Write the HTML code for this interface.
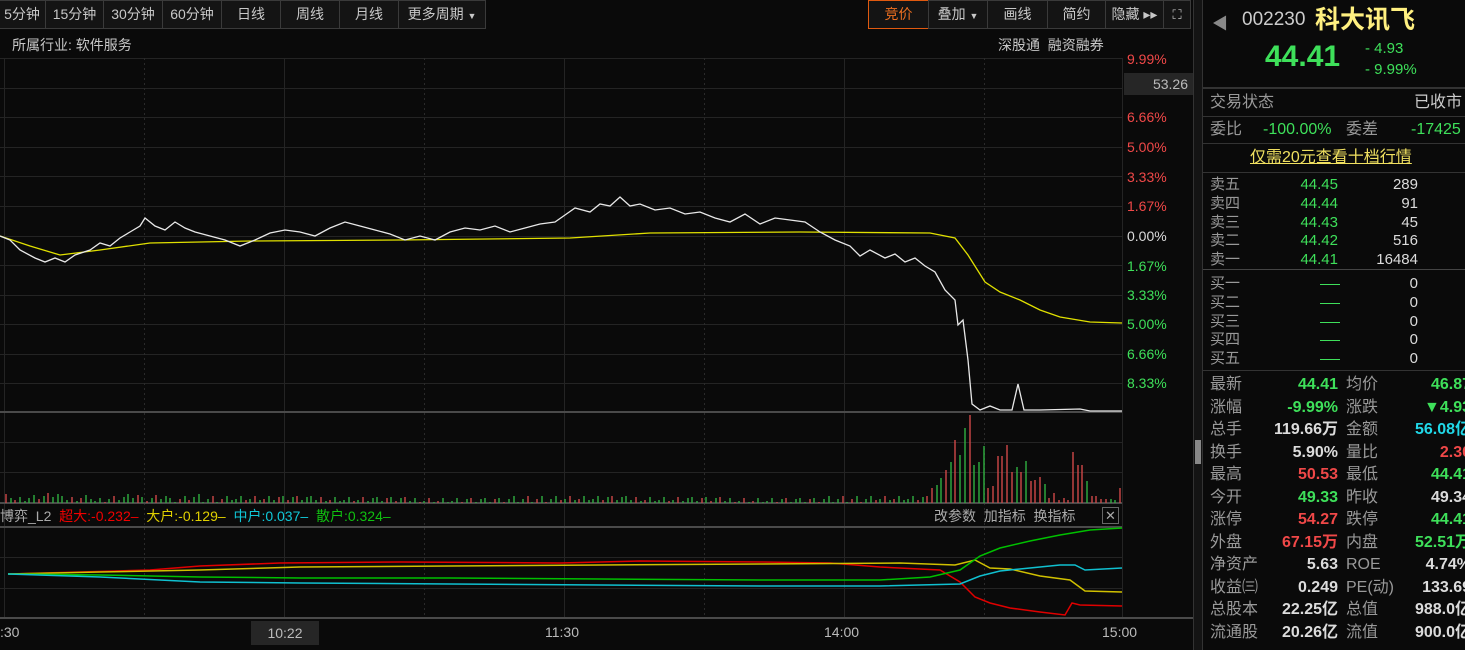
<!DOCTYPE html>
<html><head><meta charset="utf-8"><style>
*{margin:0;padding:0;box-sizing:border-box}
body{width:1465px;height:650px;background:#0a0a0a;overflow:hidden;position:relative;font-family:"Liberation Sans","Noto Sans CJK SC",sans-serif;color:#c8c8c8}
.a{position:absolute;white-space:nowrap}
.btn{position:absolute;top:0;height:29px;border:1px solid #3a3a3a;background:#141414;color:#c8c8c8;font-size:14px;line-height:27px;text-align:center}
.g{color:#3ee05a}.r{color:#f04848}.w{color:#dcdcdc}.y{color:#f0e040}.c{color:#20d8e8}
.rp{font-size:16px;line-height:20px}
.ob{font-size:15px}
.ob .a{line-height:18px}
</style></head><body>
<div class="btn" style="left:-2px;width:48px">5分钟</div>
<div class="btn" style="left:45px;width:59px">15分钟</div>
<div class="btn" style="left:103px;width:60px">30分钟</div>
<div class="btn" style="left:162px;width:60px">60分钟</div>
<div class="btn" style="left:221px;width:60px">日线</div>
<div class="btn" style="left:280px;width:60px">周线</div>
<div class="btn" style="left:339px;width:60px">月线</div>
<div class="btn" style="left:398px;width:88px">更多周期 <span style="font-size:9px">▼</span></div>
<div class="btn" style="left:868px;width:61px;border-color:#e05a10;color:#f07020">竞价</div>
<div class="btn" style="left:928px;width:60px">叠加 <span style="font-size:9px">▼</span></div>
<div class="btn" style="left:987px;width:61px">画线</div>
<div class="btn" style="left:1047px;width:59px">简约</div>
<div class="btn" style="left:1105px;width:59px">隐藏 ▸▸</div>
<div class="btn" style="left:1163px;width:28px;font-size:13px">⛶</div>
<div class="a" style="left:12px;top:36px;font-size:14px;line-height:18px">所属行业: 软件服务</div>
<div class="a" style="left:998px;top:36px;font-size:14px;line-height:18px">深股通 &nbsp;融资融券</div>
<svg class="a" style="left:0;top:0" width="1200" height="650" id="ch">
<g stroke="#242424" stroke-width="1">
<line x1="0" y1="58.5" x2="1122" y2="58.5"/><line x1="0" y1="88.5" x2="1122" y2="88.5"/><line x1="0" y1="117.5" x2="1122" y2="117.5"/><line x1="0" y1="147.5" x2="1122" y2="147.5"/><line x1="0" y1="176.5" x2="1122" y2="176.5"/><line x1="0" y1="206.5" x2="1122" y2="206.5"/><line x1="0" y1="236.5" x2="1122" y2="236.5"/><line x1="0" y1="265.5" x2="1122" y2="265.5"/><line x1="0" y1="295.5" x2="1122" y2="295.5"/><line x1="0" y1="324.5" x2="1122" y2="324.5"/><line x1="0" y1="354.5" x2="1122" y2="354.5"/><line x1="0" y1="383.5" x2="1122" y2="383.5"/>
<line x1="0" y1="442.5" x2="1122" y2="442.5"/><line x1="0" y1="472.5" x2="1122" y2="472.5"/>
<line x1="0" y1="557.5" x2="1122" y2="557.5"/><line x1="0" y1="588.5" x2="1122" y2="588.5"/>
<line x1="284.5" y1="58" x2="284.5" y2="618"/><line x1="564.5" y1="58" x2="564.5" y2="618"/><line x1="844.5" y1="58" x2="844.5" y2="618"/><line x1="1122.5" y1="58" x2="1122.5" y2="618"/>
<line x1="4.5" y1="58" x2="4.5" y2="618"/>
</g>
<g stroke="#2a2a2a" stroke-dasharray="2,3"><line x1="144.5" y1="58" x2="144.5" y2="618"/><line x1="424.5" y1="58" x2="424.5" y2="618"/><line x1="704.5" y1="58" x2="704.5" y2="618"/><line x1="984.5" y1="58" x2="984.5" y2="618"/></g>
<g stroke="#4a4a4a" stroke-width="2"><line x1="0" y1="412" x2="1122" y2="412"/><line x1="0" y1="503" x2="1122" y2="503"/><line x1="0" y1="527" x2="1122" y2="527"/><line x1="0" y1="618" x2="1200" y2="618"/></g>
<g id="vol"></g>
<polyline fill="none" stroke="#e0e000" stroke-width="1.3" points="0,236 30,246 60,255 100,250 150,243 250,241 400,240 570,238 650,233 800,232 930,233 955,238 968,255 985,282 1000,292 1020,300 1040,310 1060,317 1090,322 1122,323"/>
<polyline id="pl" fill="none" stroke="#e8e8e8" stroke-width="1.3"/>
<polyline fill="none" stroke="#e00000" stroke-width="1.5" points="8,574 80,572 150,570 200,566 280,563 400,562 560,563 640,561 760,562 830,563 880,567 940,570 960,582 975,597 990,603 1010,608 1040,612 1065,615 1072,603 1080,605 1122,606"/>
<polyline fill="none" stroke="#d0c000" stroke-width="1.5" points="8,574 100,572 200,570 300,567 450,566 600,565 760,564 900,563 955,565 975,560 990,568 1010,569 1040,576 1070,580 1085,591 1122,592"/>
<polyline fill="none" stroke="#00c000" stroke-width="1.5" points="8,574 100,575 200,577 300,578 450,578 600,579 760,580 880,580 930,577 960,570 980,556 1000,548 1030,541 1060,535 1090,530 1122,528"/>
<polyline fill="none" stroke="#10c0d0" stroke-width="1.5" points="8,574 100,577 200,582 300,583 450,584 600,585 760,586 880,586 960,584 980,576 1000,571 1030,568 1060,565 1075,565 1085,570 1122,568"/>
</svg>
<div class="a r" style="left:1127px;top:51px;font-size:14px">9.99%</div>
<div class="a" style="left:1124px;top:73px;width:70px;height:22px;background:#262626;color:#bbb;font-size:14px;line-height:22px;text-align:right;padding-right:6px">53.26</div>
<div class="a r" style="left:1127px;top:110px;font-size:14px;line-height:1;">6.66%</div>
<div class="a r" style="left:1127px;top:140px;font-size:14px;line-height:1">5.00%</div>
<div class="a r" style="left:1127px;top:170px;font-size:14px;line-height:1">3.33%</div>
<div class="a r" style="left:1127px;top:199px;font-size:14px;line-height:1">1.67%</div>
<div class="a w" style="left:1127px;top:229px;font-size:14px;line-height:1">0.00%</div>
<div class="a g" style="left:1127px;top:259px;font-size:14px;line-height:1">1.67%</div>
<div class="a g" style="left:1127px;top:288px;font-size:14px;line-height:1">3.33%</div>
<div class="a g" style="left:1127px;top:317px;font-size:14px;line-height:1">5.00%</div>
<div class="a g" style="left:1127px;top:347px;font-size:14px;line-height:1">6.66%</div>
<div class="a g" style="left:1127px;top:376px;font-size:14px;line-height:1">8.33%</div>
<div class="a" style="left:0;top:507px;font-size:14px;line-height:18px"><span style="color:#aaa">博弈_L2</span> &nbsp;<span style="color:#f00000">超大:-0.232–</span> &nbsp;<span style="color:#e0d000">大户:-0.129–</span> &nbsp;<span style="color:#10c8d8">中户:0.037–</span> &nbsp;<span style="color:#10c010">散户:0.324–</span></div>
<div class="a" style="left:934px;top:507px;font-size:14px;color:#aaa;line-height:18px">改参数 &nbsp;加指标 &nbsp;换指标</div>
<div class="a" style="left:1102px;top:507px;width:17px;height:17px;border:1px solid #666;color:#aaa;font-size:13px;line-height:15px;text-align:center">✕</div>
<div class="a" style="left:0;top:624px;font-size:14px;color:#bbb">:30</div>
<div class="a" style="left:251px;top:621px;width:68px;height:24px;background:#262626;font-size:14px;color:#bbb;text-align:center;line-height:24px">10:22</div>
<div class="a" style="left:545px;top:624px;font-size:14px;color:#bbb">11:30</div>
<div class="a" style="left:824px;top:624px;font-size:14px;color:#bbb">14:00</div>
<div class="a" style="left:1102px;top:624px;font-size:14px;color:#bbb">15:00</div>
<div class="a" style="left:1193px;top:0;width:10px;height:650px;background:#141414;border-left:1px solid #333;border-right:1px solid #333"></div>
<div class="a" style="left:1195px;top:440px;width:6px;height:24px;background:#888"></div>
<div class="a" style="left:1212px;top:10px;color:#888;font-size:16px">◀</div>
<div class="a" style="left:1242px;top:8px;font-size:19px;color:#ccc;line-height:24px">002230</div>
<div class="a" style="left:1315px;top:4px;font-size:25px;color:#fff080;font-weight:bold;line-height:32px">科大讯飞</div>
<div class="a g" style="left:1265px;top:40px;font-size:30px;font-weight:bold">44.41</div>
<div class="a g" style="left:1365px;top:40px;font-size:15px">- 4.93</div>
<div class="a g" style="left:1365px;top:61px;font-size:15px">- 9.99%</div>
<div class="a" style="left:1203px;top:87px;width:262px;height:2px;background:#333"></div>
<div class="a rp" style="left:1210px;top:93px;color:#999">交易状态</div>
<div class="a rp" style="left:1414px;top:93px;color:#ccc">已收市</div>
<div class="a" style="left:1203px;top:116px;width:262px;height:1px;background:#333"></div>
<div class="a rp" style="left:1210px;top:120px;color:#999">委比</div>
<div class="a rp g" style="left:1263px;top:120px">-100.00%</div>
<div class="a rp" style="left:1346px;top:120px;color:#999">委差</div>
<div class="a rp g" style="left:1411px;top:120px">-17425</div>
<div class="a" style="left:1203px;top:143px;width:262px;height:1px;background:#333"></div>
<div class="a rp" style="left:1250px;top:148px;color:#f0e060;text-decoration:underline">仅需20元查看十档行情</div>
<div class="a" style="left:1203px;top:172px;width:262px;height:1px;background:#333"></div>
<div class="a ob" id="ob" style="left:1210px;top:176px;width:255px"></div>
<div class="a" style="left:1203px;top:269px;width:262px;height:1px;background:#444"></div>
<div class="a" style="left:1203px;top:370px;width:262px;height:1px;background:#333"></div>
<div class="a" id="st" style="left:1210px;top:375px;width:255px"></div>
<script>
var pts=[[0,236],[10,240],[20,250],[35,258],[45,262],[55,258],[65,262],[75,255],[90,250],[100,243],[110,246],[120,238],[130,232],[140,226],[145,218],[155,226],[165,230],[175,222],[185,228],[195,232],[210,236],[225,240],[240,246],[255,240],[270,233],[285,230],[300,232],[315,236],[330,228],[345,222],[360,226],[375,230],[390,234],[405,240],[420,236],[435,240],[450,232],[465,228],[480,230],[495,226],[510,232],[525,228],[540,224],[555,222],[565,215],[575,208],[590,212],[600,204],[610,206],[620,197],[630,206],[640,204],[655,210],[670,208],[685,214],[700,212],[715,218],[730,222],[745,214],[760,224],[775,218],[790,220],[805,222],[820,232],[835,240],[850,246],[860,256],[870,250],[885,258],[895,254],[905,262],[915,258],[925,266],[935,272],[945,290],[955,300],[958,325],[963,320],[968,360],[972,404],[980,410],[990,406],[1000,410],[1012,410],[1018,384],[1024,410],[1040,410],[1080,409],[1090,411],[1122,411]];
document.getElementById('pl').setAttribute('points',pts.map(p=>p.join(',')).join(' '));
var vol=document.getElementById('vol'),s='';
var big={930:[488,'r'],935:[485,'g'],940:[478,'g'],945:[470,'r'],950:[462,'g'],955:[440,'r'],960:[455,'g'],965:[428,'g'],970:[415,'r'],975:[465,'g'],980:[462,'g'],985:[446,'g'],990:[488,'r'],995:[486,'r'],1000:[456,'r'],1005:[445,'r'],1010:[472,'r'],1015:[467,'g'],1020:[472,'r'],1025:[461,'g'],1030:[481,'r'],1035:[480,'r'],1040:[477,'r'],1045:[484,'g'],1050:[498,'r'],1055:[493,'r'],1060:[500,'r'],1065:[498,'r'],1070:[500,'r'],1075:[452,'r'],1080:[465,'r'],1085:[481,'g'],1090:[496,'r'],1095:[496,'r'],1100:[499,'r'],1105:[499,'r'],1115:[500,'g'],1120:[488,'r']};
for(var x=6;x<1122;x+=4.7){var xi=Math.round(x),h,c;var k=Math.round(xi/5)*5;if(xi>=928&&big[k]){h=big[k][0];c=big[k][1]}else{h=503-(1+((xi*37)%7)+(xi<200?((xi*13)%5):0));c=((xi*7)%3==0)?'r':'g'}
s+='<line x1="'+xi+'" x2="'+xi+'" y1="503" y2="'+h+'" stroke="'+(c=='r'?'#d04848':'#30b040')+'" stroke-width="1.4"/>';}
vol.innerHTML=s;
var ob=[['卖五','44.45','289'],['卖四','44.44','91'],['卖三','44.43','45'],['卖二','44.42','516'],['卖一','44.41','16484']],h='';
ob.forEach((r,i)=>{var t=i*18.8;h+='<div class="a" style="top:'+t+'px;left:0;color:#999">'+r[0]+'</div><div class="a g" style="top:'+t+'px;right:127px">'+r[1]+'</div><div class="a w" style="top:'+t+'px;right:47px">'+r[2]+'</div>'});
['买一','买二','买三','买四','买五'].forEach((n,i)=>{var t=99+i*18.8;h+='<div class="a" style="top:'+t+'px;left:0;color:#999">'+n+'</div><div class="a" style="top:'+(t+9)+'px;left:110px;width:20px;height:1px;background:#3ee05a"></div><div class="a w" style="top:'+t+'px;right:47px">0</div>'});
document.getElementById('ob').innerHTML=h;
var st=[['最新','44.41','g','均价','46.87','g'],['涨幅','-9.99%','g','涨跌','▼4.93','g'],['总手','119.66万','w','金额','56.08亿','c'],['换手','5.90%','w','量比','2.30','r'],['最高','50.53','r','最低','44.41','g'],['今开','49.33','g','昨收','49.34','w'],['涨停','54.27','r','跌停','44.41','g'],['外盘','67.15万','r','内盘','52.51万','g'],['净资产','5.63','w','ROE','4.74%','w'],['收益㈢','0.249','w','PE(动)','133.69','w'],['总股本','22.25亿','w','总值','988.0亿','w'],['流通股','20.26亿','w','流值','900.0亿','w']];h='';
st.forEach((r,i)=>{var t=i*22.5;h+='<div class="a rp" style="top:'+t+'px;left:0;color:#999">'+r[0]+'</div><div class="a rp '+r[2]+'" style="top:'+t+'px;right:127px;font-weight:bold">'+r[1]+'</div><div class="a rp" style="top:'+t+'px;left:136px;color:#999">'+r[3]+'</div><div class="a rp '+r[5]+'" style="top:'+t+'px;right:-6px;font-weight:bold">'+r[4]+'</div>'});
document.getElementById('st').innerHTML=h;
</script>
</body></html>
